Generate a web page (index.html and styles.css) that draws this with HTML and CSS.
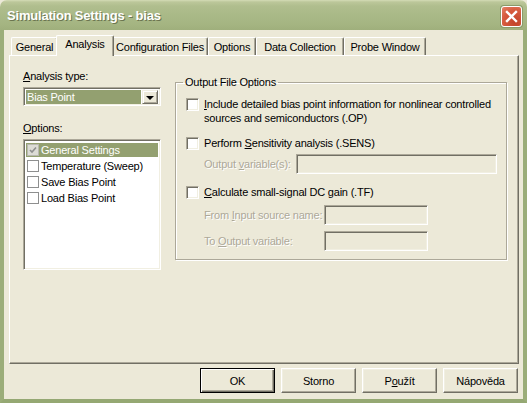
FILE: index.html
```html
<!DOCTYPE html>
<html>
<head>
<meta charset="utf-8">
<link rel="stylesheet" href="styles.css">
</head>
<body>
<div class="window">
  <div class="titlebar">
    <span class="title">Simulation Settings - bias</span>
    <div class="close">
      <svg width="13" height="13" viewBox="0 0 13 13"><path d="M2 2 L11 11 M11 2 L2 11" stroke="#fff" stroke-width="2.4" stroke-linecap="square"/></svg>
    </div>
  </div>
  <div class="client">
    <div class="tabs">
      <div class="tab w-general">General</div>
      <div class="tab active w-analysis">Analysis</div>
      <div class="tab w-config">Configuration Files</div>
      <div class="tab w-options">Options</div>
      <div class="tab w-data">Data Collection</div>
      <div class="tab w-probe">Probe Window</div>
    </div>
    <div class="panel">
      <div class="leftcol">
        <div class="label"><u>A</u>nalysis type:</div>
        <div class="combo">
          <div class="combo-value">Bias Point</div>
          <div class="combo-btn"><span class="tri"></span></div>
        </div>
        <div class="label opt-label"><u>O</u>ptions:</div>
        <div class="listbox">
          <div class="item selected"><span class="lcb checked"><svg width="8" height="8" viewBox="0 0 8 8"><path d="M1 4 L3 6 L7 1.5" stroke="#8E8F8F" stroke-width="1.6" fill="none"/></svg></span>General Settings</div>
          <div class="item"><span class="lcb"></span>Temperature (Sweep)</div>
          <div class="item"><span class="lcb"></span>Save Bias Point</div>
          <div class="item"><span class="lcb"></span>Load Bias Point</div>
        </div>
      </div>
      <fieldset class="group">
        <legend>Output File Options</legend>
        <div class="row row1">
          <span class="cb"></span>
          <div class="cbtext"><u>I</u>nclude detailed bias point information for nonlinear controlled<br>sources and semiconductors (.OP)</div>
        </div>
        <div class="row row2">
          <span class="cb"></span>
          <div class="cbtext">Perform <u>S</u>ensitivity analysis (.SENS)</div>
        </div>
        <div class="row row3">
          <div class="dis lbl-out">Output <u>v</u>ariable(s):</div>
          <div class="edit edit-wide"></div>
        </div>
        <div class="row row4">
          <span class="cb"></span>
          <div class="cbtext"><u>C</u>alculate small-signal DC gain (.TF)</div>
        </div>
        <div class="row row5">
          <div class="dis lbl-from">From <u>I</u>nput source name:</div>
          <div class="edit edit-small"></div>
        </div>
        <div class="row row6">
          <div class="dis lbl-from">To <u>O</u>utput variable:</div>
          <div class="edit edit-small"></div>
        </div>
      </fieldset>
    </div>
    <div class="buttons">
      <div class="btn default"><span>OK</span></div>
      <div class="btn"><span>Storno</span></div>
      <div class="btn"><span>P<u>o</u>užít</span></div>
      <div class="btn"><span>Nápověda</span></div>
    </div>
  </div>
</div>
</body>
</html>
```

FILE: styles.css
```css
html, body {
  margin: 0;
  padding: 0;
}
body {
  width: 527px;
  height: 403px;
  overflow: hidden;
  background: #ECE9D8;
  font-family: "Liberation Sans", Arial, sans-serif;
  font-size: 11px;
  letter-spacing: -0.2px;
  color: #000;
}
u { text-decoration: underline; text-underline-offset: 1px; }

.window {
  width: 527px;
  height: 403px;
  display: flex;
  flex-direction: column;
  box-sizing: border-box;
}

.titlebar {
  height: 30px;
  flex: none;
  box-sizing: border-box;
  display: flex;
  align-items: center;
  padding: 0 5px 0 7px;
  border-radius: 7px 7px 0 0;
  background: linear-gradient(to bottom, #D4DCB6 0px, #BCC79A 2px, #B0BE8E 6px, #AABA88 14px, #A5B582 24px, #9FAF7C 30px);
}
.title {
  flex: 1;
  color: #fff;
  font-family: "Liberation Sans", Arial, sans-serif;
  font-weight: bold;
  font-size: 13px;
  letter-spacing: -0.2px;
  text-shadow: 1px 1px 0 #6B7550;
}
.close {
  width: 21px;
  height: 21px;
  box-sizing: border-box;
  border: 1px solid #fff;
  border-radius: 3px;
  background: radial-gradient(circle at 70% 80%, #C2432A 0%, #D75B3E 60%, #E48369 100%);
  display: flex;
  align-items: center;
  justify-content: center;
  margin-top: 2px;
  box-shadow: 0 0 0 1px #8A9A6A;
}

.client {
  flex: 1;
  background: #ECE9D8;
  border-left: 4px solid #9BAD79;
  border-right: 4px solid #9BAD79;
  border-bottom: 4px solid #95A873;
  padding: 5px 5px 0 5px;
  display: flex;
  flex-direction: column;
}

.tabs {
  height: 20px;
  display: flex;
  align-items: flex-end;
  padding-left: 2px;
  position: relative;
  z-index: 1;
}
.tab {
  height: 18px;
  box-sizing: border-box;
  border-top: 1px solid #fff;
  border-left: 1px solid #fff;
  border-right: 1px solid #716F64;
  box-shadow: inset -1px 0 0 #ACA899;
  border-radius: 2px 2px 0 0;
  display: flex;
  align-items: center;
  justify-content: center;
  padding-top: 1px;
}
.tab.active {
  height: 21px;
  margin: 0 -2px -1px -2px;
  background: #ECE9D8;
  position: relative;
  z-index: 2;
  align-items: flex-start;
  padding-top: 2px;
}
.w-general { width: 47px; }
.w-analysis { width: 58px; }
.w-config { width: 96px; }
.w-options { width: 48px; }
.w-data { width: 88px; }
.w-probe { width: 82px; }

.panel {
  width: 510px;
  height: 309px;
  box-sizing: border-box;
  border-top: 1px solid #fff;
  border-left: 1px solid #fff;
  border-right: 1px solid #716F64;
  border-bottom: 1px solid #716F64;
  box-shadow: inset -1px -1px 0 #ACA899;
  display: flex;
  align-items: flex-start;
}

.leftcol {
  width: 138px;
  margin-left: 13px;
  padding-top: 14px;
  display: flex;
  flex-direction: column;
}
.label {
  height: 13px;
  line-height: 13px;
}
.combo {
  margin-top: 4px;
  height: 19px;
  box-sizing: border-box;
  border-top: 1px solid #ACA899;
  border-left: 1px solid #ACA899;
  border-right: 1px solid #fff;
  border-bottom: 1px solid #fff;
  box-shadow: inset 1px 1px 0 #716F64, inset -1px -1px 0 #F1EFE2;
  background: #fff;
  display: flex;
  padding: 2px 2px 1px 2px;
}
.combo-value {
  flex: 1;
  background: #93A070;
  color: #fff;
  line-height: 15px;
  padding-left: 1px;
  margin-right: 1px;
}
.combo-btn {
  width: 16px;
  box-sizing: border-box;
  background: #ECE9D8;
  border-top: 1px solid #F1EFE2;
  border-left: 1px solid #F1EFE2;
  border-right: 1px solid #716F64;
  border-bottom: 1px solid #716F64;
  box-shadow: inset 1px 1px 0 #fff, inset -1px -1px 0 #ACA899;
  display: flex;
  align-items: center;
  justify-content: center;
}
.tri {
  width: 0;
  height: 0;
  border-left: 4px solid transparent;
  border-right: 4px solid transparent;
  border-top: 4px solid #000;
  margin-top: 1px;
}
.opt-label {
  margin-top: 16px;
}
.listbox {
  margin-top: 4px;
  height: 131px;
  box-sizing: border-box;
  border-top: 1px solid #ACA899;
  border-left: 1px solid #ACA899;
  border-right: 1px solid #fff;
  border-bottom: 1px solid #fff;
  box-shadow: inset 1px 1px 0 #716F64, inset -1px -1px 0 #F1EFE2;
  background: #fff;
  padding: 2px;
}
.item {
  height: 16px;
  display: flex;
  align-items: center;
  white-space: nowrap;
}
.item.selected {
  background: #93A070;
  color: #fff;
  height: 14px;
  margin: 1px 0;
}
.lcb {
  width: 12px;
  height: 12px;
  box-sizing: border-box;
  border: 1px solid #8E8F8F;
  background: #fff;
  margin: 0 2px 0 1px;
  display: flex;
  align-items: center;
  justify-content: center;
  flex: none;
}
.lcb.checked {
  background: #DCDCD6;
  border-color: #B8B8B0;
}

.group {
  margin: 20px 0 0 14px;
  padding: 0 0 0 10px;
  width: 332px;
  height: 184px;
  box-sizing: border-box;
  border: 1px solid #ACA899;
  box-shadow: inset 1px 1px 0 #fff, 1px 1px 0 #fff;
  min-width: 0;
  display: block;
}
.group legend {
  padding: 0 2px;
  margin-left: -3px;
  line-height: 13px;
}
.row {
  display: flex;
  align-items: flex-start;
}
.cb {
  width: 13px;
  height: 13px;
  box-sizing: border-box;
  border-top: 1px solid #ACA899;
  border-left: 1px solid #ACA899;
  border-right: 1px solid #fff;
  border-bottom: 1px solid #fff;
  box-shadow: inset 1px 1px 0 #716F64, inset -1px -1px 0 #F1EFE2;
  background: #fff;
  flex: none;
  margin-top: 1px;
}
.cbtext {
  margin-left: 5px;
  line-height: 14px;
  white-space: nowrap;
}
.row1 { margin-top: 8px; }
.row2 { margin-top: 11px; }
.row3 { margin-top: 4px; align-items: center; padding-left: 18px; }
.row4 { margin-top: 11px; }
.row5 { margin-top: 6px; align-items: center; padding-left: 18px; }
.row6 { margin-top: 6px; align-items: center; padding-left: 18px; }
.dis {
  color: #ACA899;
  text-shadow: 1px 1px 0 #fff;
  white-space: nowrap;
}
.lbl-out { width: 92px; }
.lbl-from { width: 120px; }
.edit {
  height: 20px;
  box-sizing: border-box;
  border-top: 1px solid #ACA899;
  border-left: 1px solid #ACA899;
  border-right: 1px solid #fff;
  border-bottom: 1px solid #fff;
  box-shadow: inset 1px 1px 0 #716F64, inset -1px -1px 0 #F1EFE2;
  background: #ECE9D8;
}
.edit-wide { width: 201px; }
.edit-small { width: 104px; }

.buttons {
  display: flex;
  justify-content: flex-end;
  gap: 6px;
  margin-top: 4px;
}
.btn {
  width: 75px;
  height: 25px;
  box-sizing: border-box;
  border-top: 1px solid #fff;
  border-left: 1px solid #fff;
  border-right: 1px solid #716F64;
  border-bottom: 1px solid #716F64;
  box-shadow: inset -1px -1px 0 #ACA899, inset 1px 1px 0 #F1EFE2;
  display: flex;
  align-items: center;
  justify-content: center;
}
.btn.default {
  border: 1px solid #000;
  box-shadow: inset 1px 1px 0 #fff, inset -1px -1px 0 #716F64, inset -2px -2px 0 #ACA899;
}
```
